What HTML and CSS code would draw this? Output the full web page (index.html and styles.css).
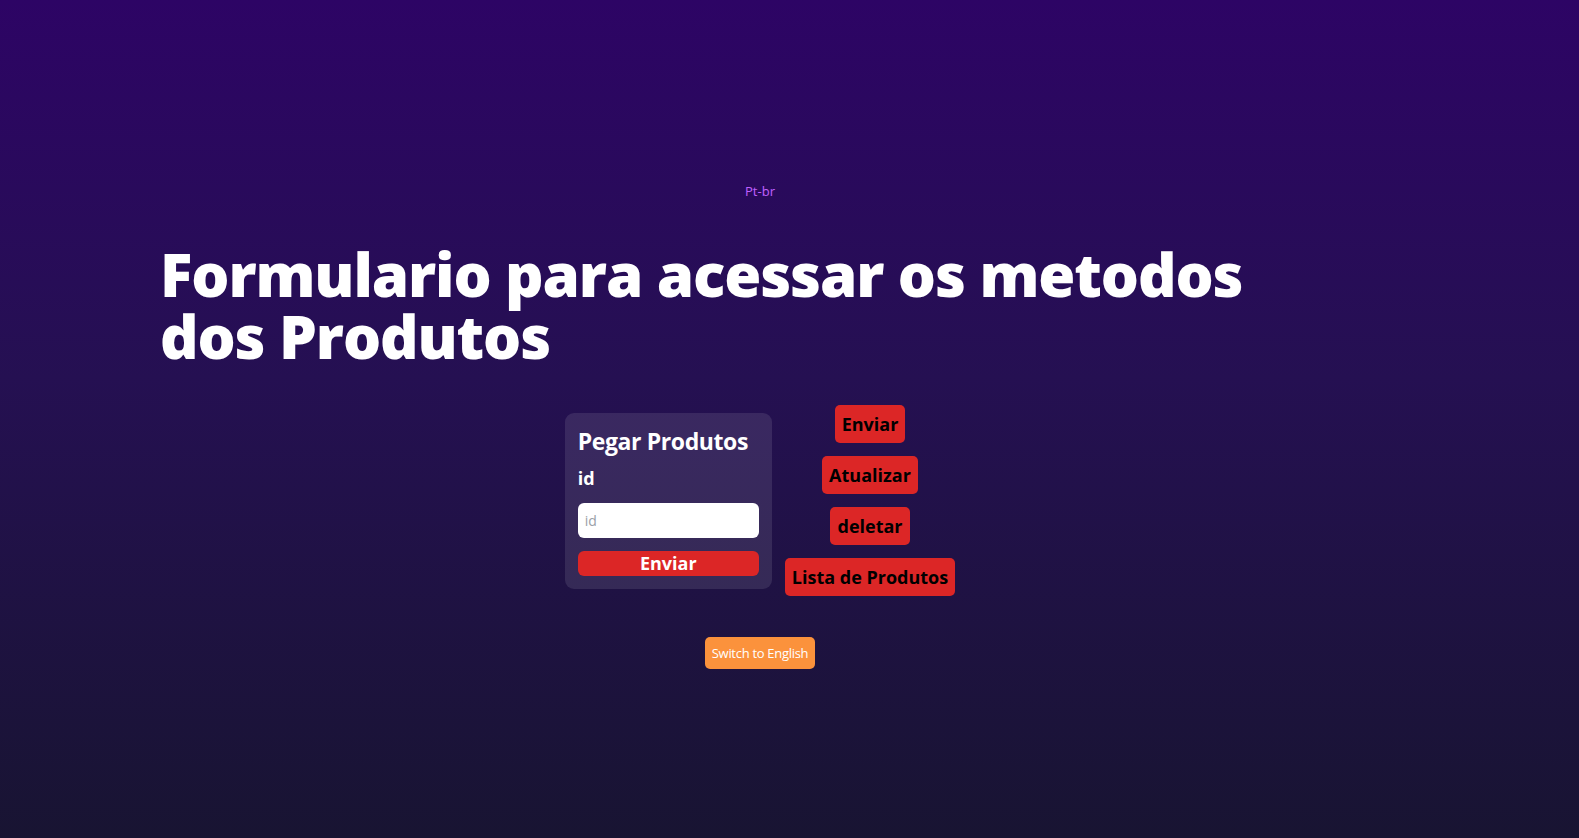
FILE: index.html
```html
<!DOCTYPE html>
<html lang="pt-br">
<head>
<meta charset="utf-8">
<title>Produtos</title>
<link rel="stylesheet" href="styles.css">
</head>
<body>
<div class="page">
  <main class="container">
    <p class="lang">Pt-br</p>
    <h1 class="title">Formulario para acessar os metodos dos Produtos</h1>
    <section class="row">
      <form class="card">
        <h2 class="card-title">Pegar Produtos</h2>
        <label class="label" for="id">id</label>
        <input class="input" id="id" type="text" placeholder="id">
        <button class="submit" type="button">Enviar</button>
      </form>
      <div class="actions">
        <button class="action" type="button">Enviar</button>
        <button class="action" type="button">Atualizar</button>
        <button class="action" type="button">deletar</button>
        <button class="action" type="button">Lista de Produtos</button>
      </div>
    </section>
    <div class="switch-wrap">
      <button class="switch" type="button">Switch to English</button>
    </div>
  </main>
</div>
</body>
</html>
```
FILE: styles.css
```css
* { box-sizing: border-box; }
html, body { margin: 0; padding: 0; }
body {
  font-family: "Open Sans", "Noto Sans", sans-serif;
  background: linear-gradient(180deg, #2d0465 0%, #251052 45%, #181432 100%);
  min-height: 100vh;
  color: #fff;
}
.page { min-height: 100vh; }
.container {
  width: 1200px;
  margin-left: 160px;
  padding-top: 181px;
  display: flex;
  flex-direction: column;
}
.lang {
  margin: 0;
  text-align: center;
  font-size: 13px;
  line-height: 20px;
  color: #c060ff;
}
.title {
  margin: 42px 0 0;
  width: 1120px;
  font-size: 60px;
  line-height: 62px;
  font-weight: 800;
  letter-spacing: -1.1px;
  color: #fff;
}
.row {
  margin-top: 38px;
  display: flex;
  justify-content: center;
  align-items: center;
  gap: 13px;
}
.card {
  width: 207px;
  padding: 12px 13px 13px;
  border-radius: 9px;
  background: rgba(255, 255, 255, 0.1);
  display: flex;
  flex-direction: column;
}
.card-title {
  margin: 0;
  font-size: 23px;
  line-height: 32px;
  font-weight: 700;
  letter-spacing: -0.4px;
}
.label {
  margin-top: 9px;
  font-size: 18px;
  line-height: 24px;
  font-weight: 700;
}
.input {
  margin-top: 13px;
  height: 35px;
  width: 100%;
  border: 0;
  border-radius: 6px;
  padding: 0 7px;
  font-family: inherit;
  font-size: 14px;
  background: #fff;
  color: #222;
}
.input::placeholder { color: #9aa0a8; }
.submit {
  margin-top: 13px;
  height: 25px;
  border: 0;
  border-radius: 6px;
  background: #dc2626;
  color: #fff;
  font-family: inherit;
  font-size: 18px;
  line-height: 25px;
  font-weight: 700;
  padding: 0;
}
.actions {
  display: flex;
  flex-direction: column;
  align-items: center;
  gap: 13px;
}
.action {
  height: 38px;
  padding: 0 7px;
  border: 0;
  border-radius: 5px;
  background: #dc2626;
  color: #000;
  font-family: inherit;
  font-size: 18px;
  font-weight: 700;
  letter-spacing: 0;
}
.switch-wrap {
  margin-top: 41px;
  display: flex;
  justify-content: center;
}
.switch {
  height: 32px;
  padding: 0 7px;
  border: 0;
  border-radius: 5px;
  background: #fb923c;
  color: #fff;
  font-family: inherit;
  font-size: 13px;
  letter-spacing: -0.3px;
}
```
